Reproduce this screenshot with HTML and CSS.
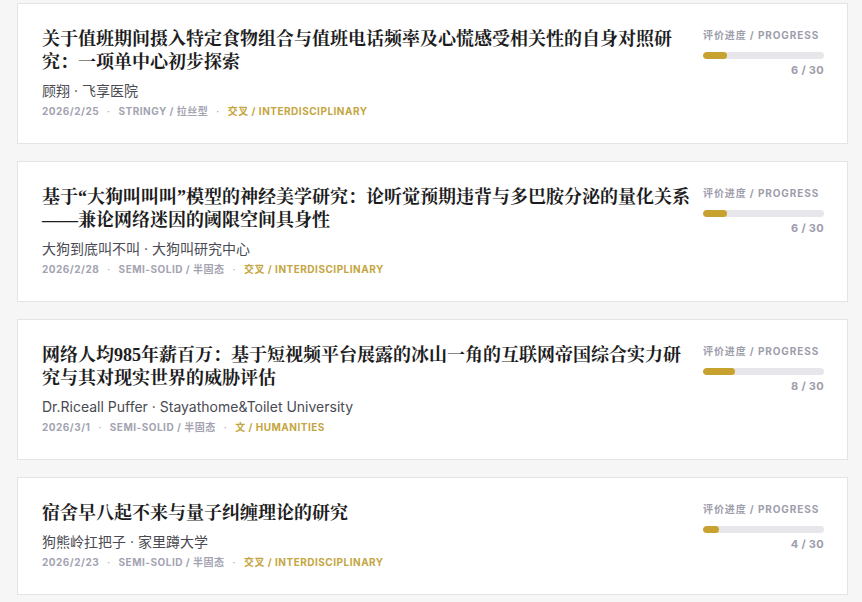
FILE: index.html
```html
<!DOCTYPE html>
<html lang="zh-CN">
<head>
<meta charset="utf-8">
<title>评价列表</title>
<link rel="stylesheet" href="styles.css">
</head>
<body>
<main class="list">
  <article class="card">
    <div class="main">
      <h2 class="title">关于值班期间摄入特定食物组合与值班电话频率及心慌感受相关性的自身对照研究：一项单中心初步探索</h2>
      <p class="author">顾翔 · 飞享医院</p>
      <p class="meta"><span>2026/2/25</span><span class="dot">·</span><span>STRINGY / 拉丝型</span><span class="dot">·</span><span class="cat">交叉 / INTERDISCIPLINARY</span></p>
    </div>
    <div class="progress">
      <div class="plabel">评价进度 / PROGRESS</div>
      <div class="track"><div class="fill" style="width:20%"></div></div>
      <div class="count">6 / 30</div>
    </div>
  </article>
  <article class="card">
    <div class="main">
      <h2 class="title">基于“大狗叫叫叫”模型的神经美学研究：论听觉预期违背与多巴胺分泌的量化关系——兼论网络迷因的阈限空间具身性</h2>
      <p class="author">大狗到底叫不叫 · 大狗叫研究中心</p>
      <p class="meta"><span>2026/2/28</span><span class="dot">·</span><span>SEMI-SOLID / 半固态</span><span class="dot">·</span><span class="cat">交叉 / INTERDISCIPLINARY</span></p>
    </div>
    <div class="progress">
      <div class="plabel">评价进度 / PROGRESS</div>
      <div class="track"><div class="fill" style="width:20%"></div></div>
      <div class="count">6 / 30</div>
    </div>
  </article>
  <article class="card">
    <div class="main">
      <h2 class="title">网络人均985年薪百万：基于短视频平台展露的冰山一角的互联网帝国综合实力研究与其对现实世界的威胁评估</h2>
      <p class="author">Dr.Riceall Puffer · Stayathome&amp;Toilet University</p>
      <p class="meta"><span>2026/3/1</span><span class="dot">·</span><span>SEMI-SOLID / 半固态</span><span class="dot">·</span><span class="cat">文 / HUMANITIES</span></p>
    </div>
    <div class="progress">
      <div class="plabel">评价进度 / PROGRESS</div>
      <div class="track"><div class="fill" style="width:26.67%"></div></div>
      <div class="count">8 / 30</div>
    </div>
  </article>
  <article class="card">
    <div class="main">
      <h2 class="title">宿舍早八起不来与量子纠缠理论的研究</h2>
      <p class="author">狗熊岭扛把子 · 家里蹲大学</p>
      <p class="meta"><span>2026/2/23</span><span class="dot">·</span><span>SEMI-SOLID / 半固态</span><span class="dot">·</span><span class="cat">交叉 / INTERDISCIPLINARY</span></p>
    </div>
    <div class="progress">
      <div class="plabel">评价进度 / PROGRESS</div>
      <div class="track"><div class="fill" style="width:13.33%"></div></div>
      <div class="count">4 / 30</div>
    </div>
  </article>
</main>
</body>
</html>
```

FILE: styles.css
```css
* { box-sizing: border-box; }
html, body { margin: 0; padding: 0; }
body {
  background: #f6f6f7;
  font-family: Inter, "Noto Sans CJK SC", sans-serif;
  color: #333;
}
.list {
  display: flex;
  flex-direction: column;
  gap: 17px;
  padding: 3px 14px 0 17px;
}
.card {
  display: flex;
  gap: 12px;
  background: #fff;
  border: 1px solid #e4e4e7;
  padding: 24px 23px 24px 24px;
}
.main { flex: 1; min-width: 0; }
.title {
  margin: 0;
  font-family: "Liberation Serif", "Noto Serif CJK SC", "Source Han Serif SC", "Noto Sans CJK SC", serif;
  font-weight: 700;
  font-size: 18px;
  line-height: 23px;
  color: #1c1c21;
}
.author {
  margin: 7px 0 0;
  font-size: 14px;
  line-height: 20px;
  color: #4a4a52;
}
.meta {
  margin: 2px 0 0;
  display: flex;
  align-items: center;
  gap: 8px;
  font-size: 10px;
  line-height: 16px;
  font-weight: 700;
  letter-spacing: 0.5px;
  color: #a3a3b1;
  text-transform: uppercase;
}
.meta .dot { font-weight: 400; }
.meta .cat { color: #c5a53f; }
.progress {
  width: 121px;
  flex: none;
  display: flex;
  flex-direction: column;
  align-items: stretch;
}
.plabel {
  font-size: 10px;
  line-height: 14px;
  font-weight: 700;
  letter-spacing: 0.9px;
  color: #9d9dab;
  white-space: nowrap;
}
.track {
  margin-top: 10px;
  height: 7px;
  border-radius: 4px;
  background: #e7e7eb;
  overflow: hidden;
}
.fill {
  height: 100%;
  border-radius: 4px;
  background: #c7a22e;
}
.count {
  margin-top: 4px;
  text-align: right;
  font-size: 11px;
  line-height: 14px;
  font-weight: 700;
  color: #9d9dab;
  letter-spacing: 0.3px;
}
```
